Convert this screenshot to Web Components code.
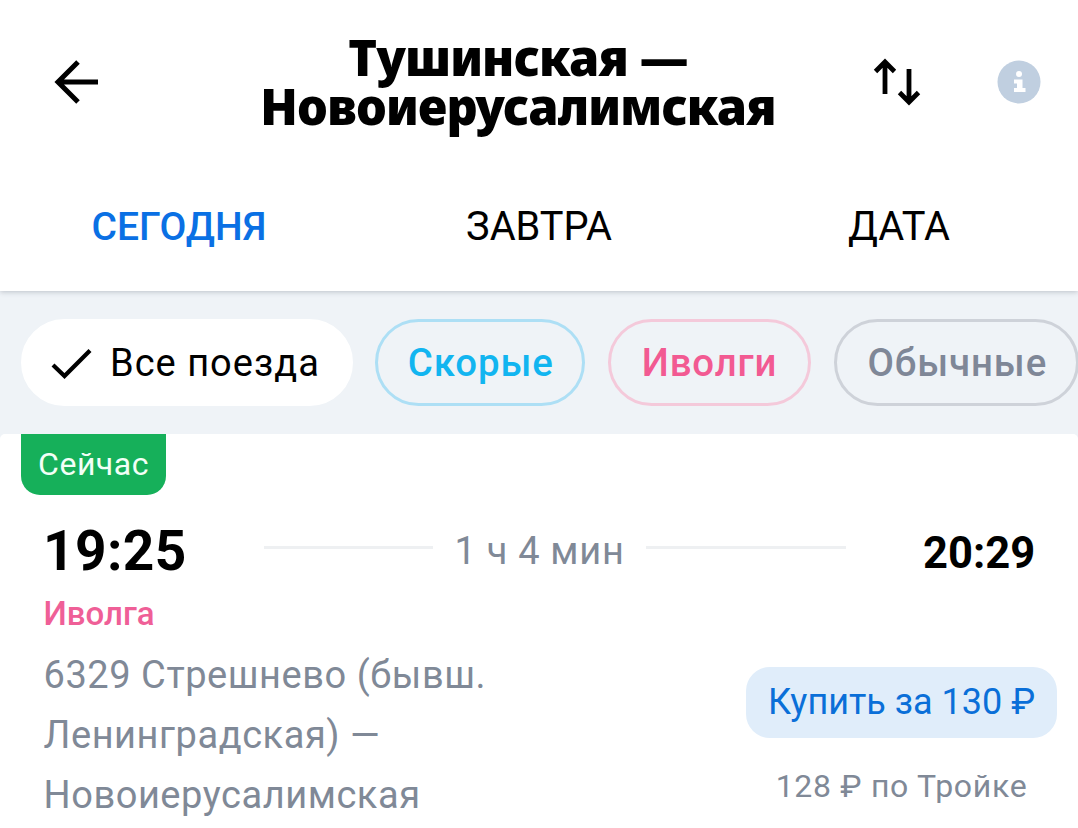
<!doctype html>
<html lang="ru">
<head>
<meta charset="utf-8">
<title>Тушинская — Новоиерусалимская</title>
<style>
html, body {margin:0; background:#eff3f7;}
body {width:1078px; height:828px; overflow:hidden; font-family:Roboto, "Liberation Sans", sans-serif;}
</style>
</head>
<body>
<route-header>Тушинская — Новоиерусалимская</route-header>
<day-tabs></day-tabs>
<filter-bar>
    <filter-chip selected>Все поезда</filter-chip>
    <filter-chip kind="fast">Скорые</filter-chip>
    <filter-chip kind="ivolga">Иволги</filter-chip>
    <filter-chip kind="plain">Обычные</filter-chip>
</filter-bar>
<train-card badge="Сейчас" from="19:25" to="20:29" duration="1 ч 4 мин" type="Иволга"
    price="130" troika="128">6329 Стрешнево (бывш. Ленинградская) — Новоиерусалимская</train-card>

<script>
class RouteHeader extends HTMLElement {
    constructor() {
        super();
        this.attachShadow({mode: 'open'}).innerHTML = `
        <style>
        :host {display:flex; align-items:center; height:164px; background:#fff; color:#000;}
        svg {display:block; flex:none; fill:none; stroke:currentColor; stroke-width:5; overflow:visible;}
        .back {margin-left:50px; width:52px; height:48px;}
        h1 {
            flex:none; width:692px; margin:-1px 0 0 70px;
            font:900 48.8px/49px "Noto Sans", sans-serif; letter-spacing:-.9px; text-align:center;
        }
        .swap {margin-left:8px; width:50px; height:50px;}
        .info {margin-left:74px; width:46px; height:46px; stroke:none;}
        </style>
        <svg class="back" viewBox="0 0 52 48"><path d="M48 24H8M28 4 8 24 28 44"/></svg>
        <h1><slot></slot></h1>
        <svg class="swap" viewBox="0 0 50 50"><path d="M13 37V6M3.500 14.500 13 5 22.500 14.500M37 12V44M27.500 35.500 37 45 46.500 35.500" stroke-width="4.8" stroke-linejoin="miter"/></svg>
        <svg class="info" viewBox="0 0 46 46"><circle cx="23" cy="23" r="21.5" fill="#c0cfe0"/><circle cx="23" cy="15" r="3" fill="#fff"/><path d="M18 20.5H26.5V29H29.500V33H18V29H21V24.500H18Z" fill="#fff"/></svg>`;
    }
}

class DayTabs extends HTMLElement {
    constructor() {
        super();
        this.attachShadow({mode: 'open'}).innerHTML = `
        <style>
        :host {
            display:grid; grid-template-columns:358px 362px 358px; height:127px;
            position:relative; background:#fff; box-shadow:0 1px 5px rgba(60,70,85,.28); clip-path:inset(0 0 -10px 0);
            font:400 39.8px/126px Roboto, sans-serif; color:#000; text-align:center;
        }
        .on {color:#0a70e4; font-weight:500; font-size:39px;}
        </style>
        <span class="on">СЕГОДНЯ</span><span>ЗАВТРА</span><span>ДАТА</span>`;
    }
}

class FilterBar extends HTMLElement {
    constructor() {
        super();
        this.attachShadow({mode: 'open'}).innerHTML = `
        <style>
        :host {
            display:flex; gap:22px; height:143px; box-sizing:border-box; padding:28px 0 0 21px;
            background:#eff3f7; overflow:hidden;
        }
        </style>
        <slot></slot>`;
    }
}

class FilterChip extends HTMLElement {
    constructor() {
        super();
        this.attachShadow({mode: 'open'}).innerHTML = `
        <style>
        :host {
            display:flex; flex:none; align-items:center; gap:17px; height:87px; box-sizing:border-box;
            padding:0 29px; border:3px solid var(--line); border-radius:44px;
            font:500 38.4px Roboto, sans-serif; letter-spacing:.9px; color:var(--ink); white-space:nowrap;
        }
        :host([selected]) {--line:#fff; --ink:#000; background:#fff; font-weight:400; font-size:38px; padding:0 30px 0 27px; letter-spacing:1px;}
        :host([kind=fast]) {--line:#addff5; --ink:#12b5f0; padding:0 28px 0 30px;}
        :host([kind=ivolga]) {--line:#f4c9da; --ink:#f25a92; padding:0 31px; margin-left:1px;}
        :host([kind=plain]) {--line:#ced2d9; --ink:#7f8797; padding:0 29px 0 30px; margin-left:1px;}
        svg {display:none; width:42px; height:32px; fill:none; stroke:#000; stroke-width:4.2;}
        :host([selected]) svg {display:block;}
        </style>
        <svg viewBox="0 0 42 32"><path d="M2 18 13.500 29 39 3.500"/></svg>
        <slot></slot>`;
    }
}

class TrainCard extends HTMLElement {
    constructor() {
        super();
        this.attachShadow({mode: 'open'}).innerHTML = `
        <style>
        :host {display:block; height:394px; border-radius:5px 5px 0 0; background:#fff; color:#808997; overflow:hidden;}
        .badge {
            width:145px; height:61px; margin-left:21px; box-sizing:border-box; padding-top:9px;
            border-radius:0 0 19px 19px; background:#16b05a; color:#f2fff6;
            font:400 32px/42px Roboto, sans-serif; text-align:center; letter-spacing:.5px;
        }
        .times {display:flex; align-items:center; height:76px; margin-top:18px; padding-left:43px;}
        .from {width:221px; font:700 55px/76px Roboto, sans-serif; color:#000; letter-spacing:.4px;}
        .line {flex:none; height:3px; background:#eef0f2; margin-top:-7px;}
        .dur {width:213px; text-align:center; font:400 38px/76px Roboto, sans-serif; letter-spacing:.7px;}
        .to {margin-left:77px; font:700 43.5px/76px Roboto, sans-serif; color:#000; margin-top:6px;}
        .body {display:flex; justify-content:space-between; padding:0 21px 0 43.5px;}
        .type {margin-top:2px; font:500 33px/46px Roboto, sans-serif; color:#ef5f97;}
        .desc {width:480px; margin-top:8px; font:400 38px/60px Roboto, sans-serif; letter-spacing:.55px;}
        .buy {flex:none; width:311px; margin-top:78px; text-align:center;}
        .btn {
            height:71px; border-radius:24px; background:#e0edfa; color:#0a6fd8;
            font:400 36px/71px Roboto, sans-serif;
        }
        .sub {margin-top:28px; font:400 32px/40px Roboto, sans-serif; letter-spacing:.7px;}
        </style>
        <div class="badge"></div>
        <div class="times">
            <span class="from"></span>
            <span class="line" style="width:169px"></span>
            <span class="dur"></span>
            <span class="line" style="width:200px"></span>
            <span class="to"></span>
        </div>
        <div class="body">
            <div>
                <div class="type"></div>
                <div class="desc"><slot></slot></div>
            </div>
            <div class="buy">
                <div class="btn"></div>
                <div class="sub"></div>
            </div>
        </div>`;
    }
    connectedCallback() {
        let $ = s => this.shadowRoot.querySelector(s), attr = a => this.getAttribute(a);
        $('.badge').textContent = attr('badge');
        $('.from').textContent = attr('from');
        $('.to').textContent = attr('to');
        $('.dur').textContent = attr('duration');
        $('.type').textContent = attr('type');
        $('.btn').textContent = `Купить за ${attr('price')} ₽`;
        $('.sub').textContent = `${attr('troika')} ₽ по Тройке`;
    }
}

customElements.define('route-header', RouteHeader);
customElements.define('day-tabs', DayTabs);
customElements.define('filter-bar', FilterBar);
customElements.define('filter-chip', FilterChip);
customElements.define('train-card', TrainCard);
</script>
</body>
</html>
